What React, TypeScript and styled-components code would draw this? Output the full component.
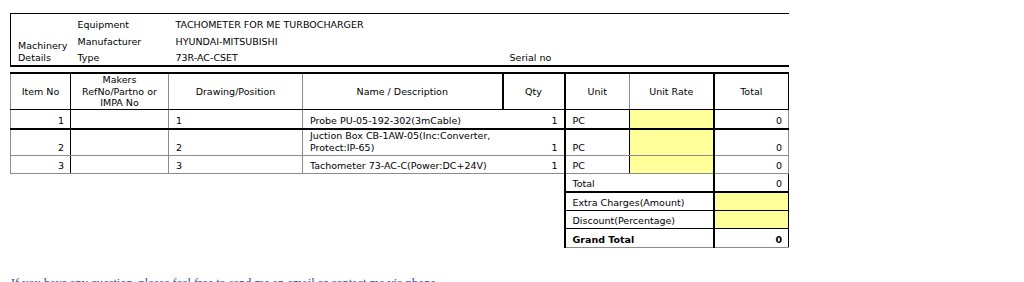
import React from "react";
import styled, { createGlobalStyle } from "styled-components";

// k = thin black, K = thick black, g = thin gray
type Line = "k" | "K" | "g" | undefined;

const line = (l?: Line) =>
  l === "K"
    ? "2px solid #000"
    : l === "k"
    ? "1px solid #000"
    : l === "g"
    ? "1px solid #8c8c8c"
    : "none";

const GlobalStyle = createGlobalStyle`
  body {
    margin: 0;
    background: #fff;
  }
`;

const Page = styled.div`
  padding: 13px 0 0 10px;
  font-family: "DejaVu Sans", Verdana, sans-serif;
  font-size: 9.5px;
  color: #000;
`;

const Sheet = styled.table`
  border-collapse: collapse;
  table-layout: fixed;
  width: 778px;
`;

const HeadBlock = styled(Sheet)`
  margin-bottom: 5px;
`;

const Row = styled.tr<{ $h: number }>`
  height: ${(p) => p.$h}px;
`;

type CellProps = {
  $align?: "left" | "right" | "center";
  $valign?: "top" | "middle" | "bottom";
  $yellow?: boolean;
  $bold?: boolean;
  $t?: Line;
  $b?: Line;
  $l?: Line;
  $r?: Line;
};

const Cell = styled.td<CellProps>`
  padding: 0 6px 1px 7px;
  line-height: 12px;
  white-space: nowrap;
  overflow: visible;
  text-align: ${(p) => p.$align || "left"};
  vertical-align: ${(p) => p.$valign || "bottom"};
  background: ${(p) => (p.$yellow ? "#ffff99" : "transparent")};
  font-weight: ${(p) => (p.$bold ? "bold" : "normal")};
  border-top: ${(p) => line(p.$t)};
  border-bottom: ${(p) => line(p.$b)};
  border-left: ${(p) => line(p.$l)};
  border-right: ${(p) => line(p.$r)};
`;

const HeadCell = styled(Cell)`
  text-align: center;
  vertical-align: middle;
  white-space: normal;
  line-height: 11.5px;
  padding: 0 4px;
`;

const Note = styled.p`
  margin: 28px 0 0 1px;
  font-family: "Liberation Serif", "Times New Roman", serif;
  font-size: 12.3px;
  color: #2b4ea6;
`;

const widths = [60, 98, 134, 200, 62, 65, 84, 75];

const Cols = () => (
  <colgroup>
    {widths.map((w, i) => (
      <col key={i} style={{ width: w }} />
    ))}
  </colgroup>
);

type Item = { no: string; drawing: string; name: React.ReactNode; qty: string; unit: string; h: number; b: Line };

const items: Item[] = [
  { no: "1", drawing: "1", name: "Probe PU-05-192-302(3mCable)", qty: "1", unit: "PC", h: 19, b: "K" },
  {
    no: "2",
    drawing: "2",
    name: (
      <>
        Juction Box CB-1AW-05(Inc:Converter,
        <br />
        Protect:IP-65)
      </>
    ),
    qty: "1",
    unit: "PC",
    h: 26,
    b: "g",
  },
  { no: "3", drawing: "3", name: "Tachometer 73-AC-C(Power:DC+24V)", qty: "1", unit: "PC", h: 18, b: "g" },
];

const headers = ["Item No", "Makers RefNo/Partno or IMPA No", "Drawing/Position", "Name / Description", "Qty", "Unit", "Unit Rate", "Total"];
const headLeft: Line[] = ["g", "k", "g", "g", "K", "K", "g", "K"];

type Summary = { label: string; value: string; yellow?: boolean; bold?: boolean; h: number; b: Line };

const summary: Summary[] = [
  { label: "Total", value: "0", h: 19, b: "K" },
  { label: "Extra Charges(Amount)", value: "", yellow: true, h: 18, b: "k" },
  { label: "Discount(Percentage)", value: "", yellow: true, h: 18, b: "k" },
  { label: "Grand Total", value: "0", bold: true, h: 19, b: "g" },
];

export default function App() {
  return (
    <>
      <GlobalStyle />
      <Page>
        <HeadBlock>
          <Cols />
          <tbody>
            <Row $h={18}>
              <Cell $t="k" $l="k" />
              <Cell $t="k">Equipment</Cell>
              <Cell $t="k" colSpan={6}>
                TACHOMETER FOR ME TURBOCHARGER
              </Cell>
            </Row>
            <Row $h={17}>
              <Cell rowSpan={2} $l="k" $b="K">
                Machinery
                <br />
                Details
              </Cell>
              <Cell>Manufacturer</Cell>
              <Cell colSpan={6}>HYUNDAI-MITSUBISHI</Cell>
            </Row>
            <Row $h={17}>
              <Cell $b="K">Type</Cell>
              <Cell colSpan={2} $b="K">
                73R-AC-CSET
              </Cell>
              <Cell colSpan={4} $b="K">
                Serial no
              </Cell>
            </Row>
          </tbody>
        </HeadBlock>

        <Sheet>
          <Cols />
          <tbody>
            <Row $h={37}>
              {headers.map((h, i) => (
                <HeadCell key={h} $t="K" $b="k" $l={headLeft[i]} $r={i === 7 ? "k" : undefined}>
                  {h}
                </HeadCell>
              ))}
            </Row>
            {items.map((it) => (
              <Row key={it.no} $h={it.h}>
                <Cell $align="right" $l="g" $b={it.b}>
                  {it.no}
                </Cell>
                <Cell $l="k" $b={it.b} />
                <Cell $l="g" $b={it.b}>
                  {it.drawing}
                </Cell>
                <Cell $l="g" $b={it.b}>
                  {it.name}
                </Cell>
                <Cell $align="right" $b={it.b}>
                  {it.qty}
                </Cell>
                <Cell $l="K" $b={it.b}>
                  {it.unit}
                </Cell>
                <Cell $l="k" $b={it.b} $yellow />
                <Cell $align="right" $l="K" $r="g" $b={it.b}>
                  0
                </Cell>
              </Row>
            ))}
            {summary.map((s) => (
              <Row key={s.label} $h={s.h}>
                <Cell colSpan={5} />
                <Cell colSpan={2} $l="K" $b={s.b} $bold={s.bold}>
                  {s.label}
                </Cell>
                <Cell $align="right" $l="K" $r="k" $b={s.b} $yellow={s.yellow} $bold={s.bold}>
                  {s.value}
                </Cell>
              </Row>
            ))}
          </tbody>
        </Sheet>

        <Note>If you have any question, please feel free to send me an email or contact me via phone.</Note>
      </Page>
    </>
  );
}
